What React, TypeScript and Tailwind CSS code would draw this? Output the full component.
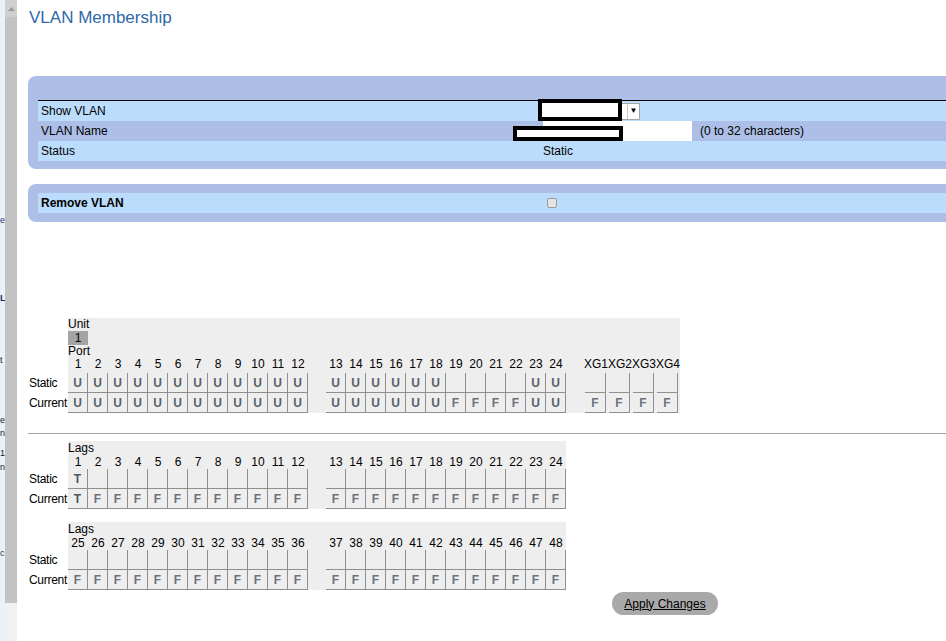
import React from "react";

const range = (from: number, count = 12) => Array.from({ length: count }, (_, i) => String(from + i));
const repeat = (v: string, count = 12) => Array.from({ length: count }, () => v);

// slivers of the clipped navigation frame on the far left
const fragments = [
  { mt: "mt-[214px]", t: "e", c: "text-[#1d3f7e]" },
  { mt: "mt-[66px]", t: "L", c: "text-[#1a2f66] font-bold" },
  { mt: "mt-[50px]", t: "t", c: "text-[#222222]" },
  { mt: "mt-[48px]", t: "e", c: "text-[#222222]" },
  { mt: "mt-[1px]", t: "n", c: "text-[#222222]" },
  { mt: "mt-[8px]", t: "1", c: "text-[#222222]" },
  { mt: "mt-[2px]", t: "n", c: "text-[#222222]" },
  { mt: "mt-[74px]", t: "c", c: "text-[#444444]" },
];

function Cell({ v, className = "w-[20px]" }: { v: string; className?: string }) {
  const color = v === "T" ? "text-[#4a5561]" : v === "F" ? "text-[#6a737d]" : "text-[#58626c]";
  return (
    <div
      className={`${className} flex h-[20px] items-center justify-center border-r border-b border-[#8f8f8f] text-[12px] font-bold ${color}`}
    >
      {v}
    </div>
  );
}

function Group({ nums, st, cur, numH }: { nums: string[]; st: string[]; cur: string[]; numH: string }) {
  return (
    <div className="flex">
      {nums.map((n, i) => (
        <div key={n} className="flex w-[20px] flex-col">
          <div className={`${numH} text-center text-[12px] text-black`}>{n}</div>
          <Cell v={st[i]} />
          <Cell v={cur[i]} />
        </div>
      ))}
    </div>
  );
}

function RowLabels({ pad }: { pad: string }) {
  return (
    <div className={`flex w-[40px] flex-col pl-[1px] text-[12px] tracking-[-0.3px] text-black ${pad}`}>
      <div className="flex h-[20px] items-center">Static</div>
      <div className="flex h-[20px] items-center whitespace-nowrap">Current</div>
    </div>
  );
}

function LagSection({ from, st, cur }: { from: number; st: string[]; cur: string[] }) {
  const numH = "h-[14px] leading-[14px]";
  return (
    <div className="flex">
      <RowLabels pad="pt-[28px]" />
      <div className="w-[498px] bg-[#eeeeee]">
        <div className="h-[14px] text-[12px] leading-[14px] text-black">Lags</div>
        <div className="flex gap-[18px]">
          <Group nums={range(from)} st={st.slice(0, 12)} cur={cur.slice(0, 12)} numH={numH} />
          <Group nums={range(from + 12)} st={st.slice(12)} cur={cur.slice(12)} numH={numH} />
        </div>
      </div>
    </div>
  );
}

export default function App() {
  const portStatic = [...repeat("U", 18), "", "", "", "", "U", "U"];
  const portCurrent = [...repeat("U", 18), "F", "F", "F", "F", "U", "U"];
  const lagStatic = ["T", ...repeat("", 23)];
  const lagCurrent = ["T", ...repeat("F", 23)];
  const numH = "h-[16px] leading-[14px]";

  return (
    <div className="flex h-[641px] w-[946px] overflow-hidden bg-white font-['Liberation_Sans',Arial,sans-serif] text-black">
      {/* clipped nav frame + its scrollbar */}
      <div className="flex w-[20px] shrink-0">
        <div className="flex w-[5px] flex-col bg-[#e9f1fa]">
          {fragments.map((f, i) => (
            <div key={i} className={`${f.mt} h-[12px] text-[9px] leading-[12px] ${f.c}`}>
              {f.t}
            </div>
          ))}
        </div>
        <div className="flex w-[12px] flex-col">
          <div className="flex h-[17px] items-center justify-center bg-[#cfcfcf]">
            <svg width="7" height="4" viewBox="0 0 7 4">
              <polygon points="3.5,0 7,4 0,4" fill="#9c9c9c" />
            </svg>
          </div>
          <div className="h-[586px] bg-[#c3c3c3]" />
          <div className="flex-1 bg-[#f1f1f1]" />
        </div>
        <div className="w-[3px] bg-white" />
      </div>

      {/* main page */}
      <div className="flex flex-col pl-[8px]">
        <div className="pt-[8px] pl-[1px] text-[17px] leading-[20px] text-[#2f68a8]">VLAN Membership</div>

        <div className="mt-[48px] w-[930px] rounded-[8px] bg-[#adbfe7] pt-[24px] pb-[8px] pl-[10px] text-[12px]">
          <div className="border-t border-black">
            <div className="flex h-[20px] items-center bg-[#bbdcfb]">
              <div className="w-[500px] pl-[3px]">Show VLAN</div>
              <div className="relative flex h-[17px] w-[102px] justify-end border border-[#a5a5a5] bg-white">
                <div className="flex w-[12px] items-center justify-center border-l border-[#c8c8c8] text-[8px] leading-none">
                  ▼
                </div>
                <div className="absolute top-[-5px] left-[-1px] h-[22px] w-[84px] border-[4px] border-black bg-white" />
              </div>
            </div>
            <div className="flex h-[20px] items-center">
              <div className="w-[500px] pl-[3px]">VLAN Name</div>
              <div className="relative ml-[5px] h-[20px] w-[149px] bg-white">
                <div className="absolute top-[5px] left-[-30px] h-[15px] w-[110px] border-[4px] border-black bg-white" />
              </div>
              <div className="ml-[8px]">(0 to 32 characters)</div>
            </div>
            <div className="flex h-[20px] items-center bg-[#bbdcfb]">
              <div className="w-[500px] pl-[3px]">Status</div>
              <div className="ml-[5px]">Static</div>
            </div>
          </div>
        </div>

        <div className="mt-[15px] w-[930px] rounded-[8px] bg-[#adbfe7] py-[9px] pl-[10px] text-[12px]">
          <div className="flex h-[20px] items-center bg-[#bbdcfb]">
            <div className="w-[500px] pl-[3px] font-bold">Remove VLAN</div>
            <div className="ml-[9px] h-[10px] w-[10px] rounded-[2px] border border-[#9a9a9a] bg-[#e4e4e4]" />
          </div>
        </div>

        {/* ports */}
        <div className="mt-[96px] flex">
          <RowLabels pad="pt-[55px]" />
          <div className="w-[612px] bg-[#eeeeee] text-[12px]">
            <div className="h-[13px] leading-[13px]">Unit</div>
            <div className="flex h-[14px] w-[20px] items-center justify-center bg-[#a4a4a4]">1</div>
            <div className="h-[12px] leading-[12px]">Port</div>
            <div className="flex gap-[18px]">
              <Group nums={range(1)} st={portStatic.slice(0, 12)} cur={portCurrent.slice(0, 12)} numH={numH} />
              <Group nums={range(13)} st={portStatic.slice(12)} cur={portCurrent.slice(12)} numH={numH} />
              <div className="flex">
                {["XG1", "XG2", "XG3", "XG4"].map((x) => (
                  <div key={x} className="flex w-[24px] flex-col">
                    <div className={`${numH} text-[12px]`}>{x}</div>
                    <Cell v="" className="ml-[1px] w-[21px]" />
                    <Cell v="F" className="ml-[1px] w-[21px]" />
                  </div>
                ))}
              </div>
            </div>
          </div>
        </div>

        <div className="mt-[20px] h-px w-[930px] bg-[#a3a3a3]" />

        <div className="mt-[7px]">
          <LagSection from={1} st={lagStatic} cur={lagCurrent} />
        </div>
        <div className="mt-[13px]">
          <LagSection from={25} st={repeat("", 24)} cur={repeat("F", 24)} />
        </div>

        <div className="mt-[2px] ml-[584px] flex h-[23px] w-[106px] items-center justify-center rounded-full bg-[#a9a9a9] text-[12px] underline">
          Apply Changes
        </div>
      </div>
    </div>
  );
}
